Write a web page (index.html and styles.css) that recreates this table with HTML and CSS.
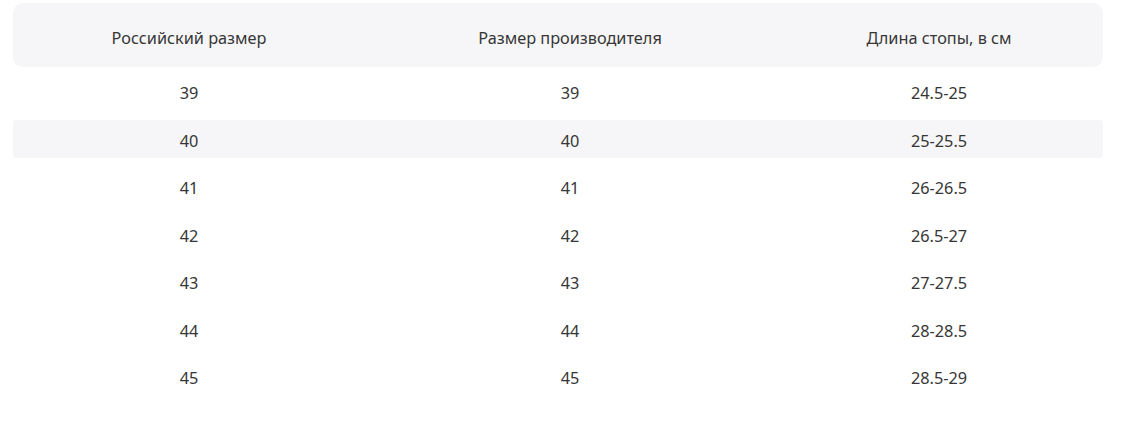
FILE: index.html
```html
<!DOCTYPE html>
<html lang="ru">
<head>
<meta charset="utf-8">
<link rel="stylesheet" href="styles.css">
</head>
<body>
<div class="table">
  <div class="row head">
    <div class="cell">Российский размер</div>
    <div class="cell">Размер производителя</div>
    <div class="cell">Длина стопы, в см</div>
  </div>
  <div class="body">
    <div class="row"><div class="cell">39</div><div class="cell">39</div><div class="cell">24.5-25</div></div>
    <div class="row alt"><div class="cell">40</div><div class="cell">40</div><div class="cell">25-25.5</div></div>
    <div class="row"><div class="cell">41</div><div class="cell">41</div><div class="cell">26-26.5</div></div>
    <div class="row"><div class="cell">42</div><div class="cell">42</div><div class="cell">26.5-27</div></div>
    <div class="row"><div class="cell">43</div><div class="cell">43</div><div class="cell">27-27.5</div></div>
    <div class="row"><div class="cell">44</div><div class="cell">44</div><div class="cell">28-28.5</div></div>
    <div class="row"><div class="cell">45</div><div class="cell">45</div><div class="cell">28.5-29</div></div>
  </div>
</div>
</body>
</html>
```

FILE: styles.css
```css
html, body {
  margin: 0;
  background: #ffffff;
}
body {
  padding: 3px 24px 0 13px;
  font-family: "Noto Sans", "Open Sans", sans-serif;
  font-size: 16.3px;
  color: #363636;
}
.table {
  display: flex;
  flex-direction: column;
}
.row {
  display: grid;
  grid-template-columns: 352fr 410fr 328fr;
  align-items: center;
  height: 38px;
}
.cell {
  text-align: center;
  padding-top: 3px;
}
.head {
  height: 64px;
  background: #f6f6f8;
  border-radius: 10px;
}
.head .cell {
  padding-top: 5px;
}
.body {
  display: flex;
  flex-direction: column;
  gap: 9.5px;
  padding-top: 5.5px;
}
.alt {
  background: #f6f6f8;
  border-radius: 3px;
}
```
